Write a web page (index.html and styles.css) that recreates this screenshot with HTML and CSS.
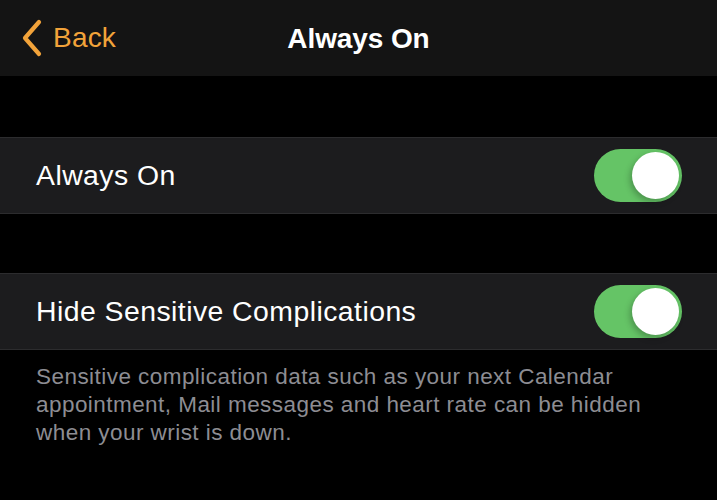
FILE: index.html
```html
<!DOCTYPE html>
<html>
<head>
<meta charset="utf-8">
<link rel="stylesheet" href="styles.css">
</head>
<body>
<div class="screen">
  <header class="nav">
    <div class="back">
      <svg class="chev" width="22" height="38" viewBox="0 0 22 38"><path d="M18 3 L4 19 L18 35" fill="none" stroke="#f2a33a" stroke-width="4.2" stroke-linecap="round" stroke-linejoin="round"/></svg>
      <span>Back</span>
    </div>
    <div class="title">Always On</div>
  </header>
  <div class="gap"></div>
  <div class="row">
    <span class="label">Always On</span>
    <div class="toggle"><div class="knob"></div></div>
  </div>
  <div class="gap"></div>
  <div class="row">
    <span class="label">Hide Sensitive Complications</span>
    <div class="toggle"><div class="knob"></div></div>
  </div>
  <p class="footer">Sensitive complication data such as your next Calendar appointment, Mail messages and heart rate can be hidden when your wrist is down.</p>
</div>
</body>
</html>
```
FILE: styles.css
```css
* { box-sizing: border-box; }
html, body { margin: 0; padding: 0; background: #000; }
body { font-family: "Liberation Sans", Arial, sans-serif; color: #fff; width: 717px; height: 500px; overflow: hidden; }
.nav {
  height: 76px;
  background: #141414;
  position: relative;
  display: flex;
  align-items: center;
  justify-content: center;
}
.back {
  position: absolute;
  left: 21px;
  top: 19px;
  display: flex;
  align-items: center;
  gap: 10px;
  color: #f2a33a;
  font-size: 28px;
  letter-spacing: 0.2px;
}
.chev { display: block; }
.title { font-size: 28px; font-weight: 700; letter-spacing: -0.1px; padding-top: 1px; }
.gap { height: 61px; }
.row {
  height: 77px;
  background: #1c1c1e;
  border-top: 1px solid #2c2c2e;
  border-bottom: 1px solid #2c2c2e;
  display: flex;
  align-items: center;
  justify-content: space-between;
  padding: 0 35px 0 36px;
}
.row + .gap { height: 59px; }
.label { font-size: 28.4px; letter-spacing: 0.45px; }
.toggle {
  width: 88px;
  height: 53px;
  border-radius: 27px;
  background: #65c466;
  position: relative;
}
.knob {
  position: absolute;
  right: 3px;
  top: 3px;
  width: 47px;
  height: 47px;
  border-radius: 50%;
  background: #fff;
  box-shadow: -2px 3px 6px rgba(0,0,0,0.25);
}
.footer {
  margin: 0;
  padding: 13px 40px 0 36px;
  font-size: 22.5px;
  line-height: 28px;
  letter-spacing: 0.45px;
  color: #8d8d93;
}
```
